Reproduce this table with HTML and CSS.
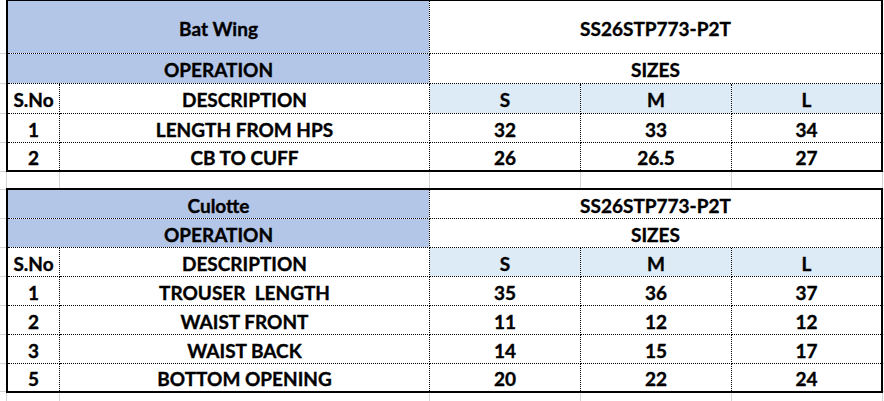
FILE: index.html
```html
<!DOCTYPE html>
<html>
<head>
<meta charset="utf-8">
<link rel="stylesheet" href="styles.css">
</head>
<body>
<div class="sheet">
  <div class="tbl t1">
    <div class="c span2 blue title">Bat Wing</div>
    <div class="c span3 last">SS26STP773-P2T</div>
    <div class="c span2 blue">OPERATION</div>
    <div class="c span3 last">SIZES</div>
    <div class="c">S.No</div>
    <div class="c">DESCRIPTION</div>
    <div class="c lblue">S</div>
    <div class="c lblue">M</div>
    <div class="c lblue last">L</div>
    <div class="c sno">1</div>
    <div class="c">LENGTH FROM HPS</div>
    <div class="c">32</div>
    <div class="c">33</div>
    <div class="c last">34</div>
    <div class="c sno bottom">2</div>
    <div class="c bottom">CB TO CUFF</div>
    <div class="c bottom">26</div>
    <div class="c bottom">26.5</div>
    <div class="c last bottom">27</div>
  </div>
  <div class="tbl t2">
    <div class="c span2 blue">Culotte</div>
    <div class="c span3 last">SS26STP773-P2T</div>
    <div class="c span2 blue">OPERATION</div>
    <div class="c span3 last">SIZES</div>
    <div class="c">S.No</div>
    <div class="c">DESCRIPTION</div>
    <div class="c lblue">S</div>
    <div class="c lblue">M</div>
    <div class="c lblue last">L</div>
    <div class="c sno">1</div>
    <div class="c">TROUSER&nbsp; LENGTH</div>
    <div class="c">35</div>
    <div class="c">36</div>
    <div class="c last">37</div>
    <div class="c sno">2</div>
    <div class="c">WAIST FRONT</div>
    <div class="c">11</div>
    <div class="c">12</div>
    <div class="c last">12</div>
    <div class="c sno">3</div>
    <div class="c">WAIST BACK</div>
    <div class="c">14</div>
    <div class="c">15</div>
    <div class="c last">17</div>
    <div class="c sno bottom">5</div>
    <div class="c bottom">BOTTOM OPENING</div>
    <div class="c bottom">20</div>
    <div class="c bottom">22</div>
    <div class="c last bottom">24</div>
  </div>
</div>
</body>
</html>
```
FILE: styles.css
```css
html, body {
  margin: 0;
  padding: 0;
  background: #ffffff;
}

.sheet {
  width: 884px;
  height: 401px;
  overflow: hidden;
  padding-left: 6px;
  box-sizing: border-box;
  font-family: "Lato", "Liberation Sans", sans-serif;
  font-weight: 700;
  font-size: 19px;
  -webkit-text-stroke: 0.35px #000;
  color: #000;
  --g: linear-gradient(#d4d4d4, #d4d4d4);
  background-color: #fff;
  background-image:
    var(--g), var(--g), var(--g), var(--g), var(--g), var(--g),
    var(--g), var(--g), var(--g), var(--g), var(--g), var(--g), var(--g),
    var(--g), var(--g), var(--g), var(--g), var(--g), var(--g);
  background-repeat: no-repeat;
  background-size:
    1px 100%, 1px 100%, 1px 100%, 1px 100%, 1px 100%, 1px 100%,
    100% 1px, 100% 1px, 100% 1px, 100% 1px, 100% 1px, 100% 1px, 100% 1px,
    100% 1px, 100% 1px, 100% 1px, 100% 1px, 100% 1px, 100% 1px;
  background-position:
    6px 0, 59px 0, 429px 0, 580px 0, 731px 0, 882px 0,
    0 53px, 0 83px, 0 113px, 0 142px, 0 171px, 0 189px, 0 218px,
    0 247px, 0 276px, 0 305px, 0 334px, 0 363px, 0 391px;
}

.tbl {
  display: grid;
  grid-template-columns: 52px 370px 151px 151px 149px;
  border: 2px solid #000;
  width: max-content;
  background: #fff;
}

.t1 {
  border-top-width: 1px;
  grid-template-rows: 53px 30px 30px 29px 27px;
}

.t2 {
  margin-top: 16px;
  grid-template-rows: 29px 29px 29px 29px 29px 29px 27px;
}

.c {
  box-sizing: border-box;
  border-right: 1px dotted #000;
  border-bottom: 1px dotted #000;
  background-clip: padding-box;
  display: flex;
  align-items: center;
  justify-content: center;
  white-space: nowrap;
  line-height: 1;
  padding-top: 2px;
}

.c.last {
  border-right: none;
}

.c.bottom {
  border-bottom: none;
}

.span2 {
  grid-column: span 2;
}

.span3 {
  grid-column: span 3;
}

.blue {
  background-color: #b4c6e7;
}

.lblue {
  background-color: #ddebf7;
}
```
